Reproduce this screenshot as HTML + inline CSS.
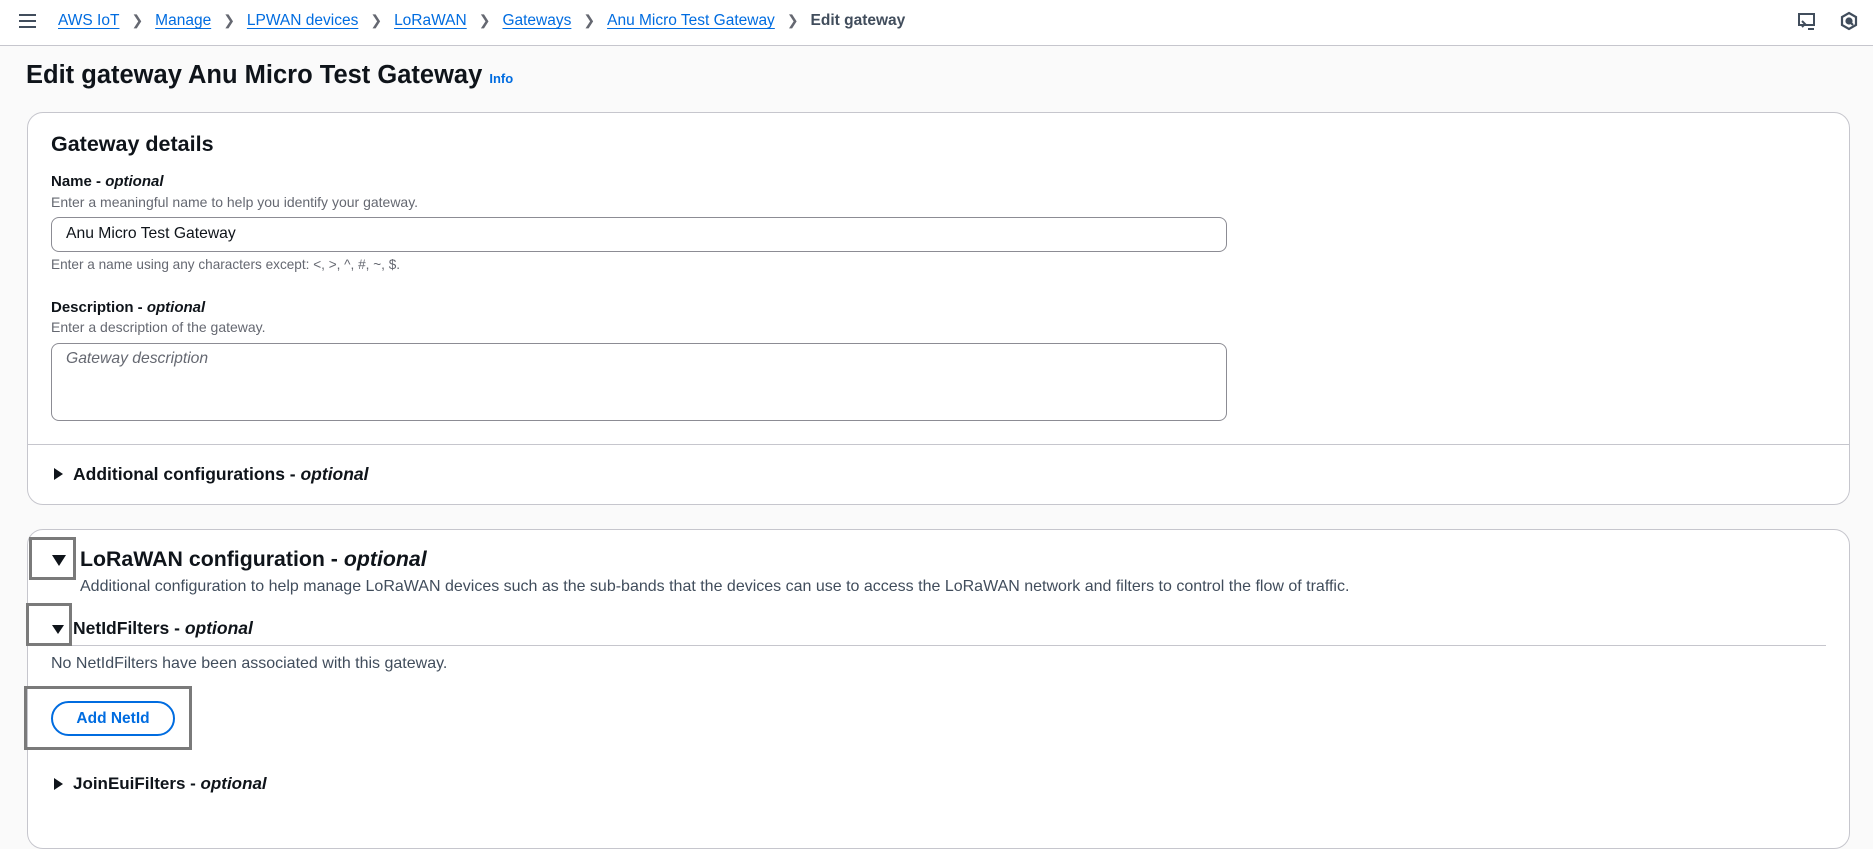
<!DOCTYPE html>
<html><head><meta charset="utf-8"><style>
*{box-sizing:border-box;margin:0;padding:0}
body{width:1873px;height:818px;overflow:hidden;background:#fafafa;font-family:"Liberation Sans",Arial,sans-serif;color:#0f141a;position:relative}
.abs{position:absolute;white-space:nowrap}
.top{position:absolute;left:0;top:0;width:1873px;height:46px;background:#fff;border-bottom:1px solid #c6c6cd}
.bc{font-size:15.5px;top:12px}
.bc a{color:#006ce0;text-decoration:underline;text-underline-offset:3px}
.sep{color:#656871;margin:0 12px;font-size:14px}
.card{position:absolute;background:#fff;border:1px solid #c6c6cd;border-radius:16px}
.lbl{font-size:15px;font-weight:bold}
.lbl i{font-style:italic}
.hint{font-size:14px;color:#656871}
.inp{position:absolute;border:1px solid #8c8c94;border-radius:8px;background:#fff}
.gbox{position:absolute;border:3px solid #7a7a7a}
.tri{position:absolute;width:0;height:0}
</style></head><body>
<div class="top"></div>
<div class="abs" style="left:19px;top:14px;width:17px">
<div style="height:2px;background:#414d5c;margin-bottom:4px"></div><div style="height:2px;background:#414d5c;margin-bottom:4px"></div><div style="height:2px;background:#414d5c"></div></div>
<div class="abs bc" style="left:58px"><a>AWS IoT</a><span class="sep">&#x276F;</span><a>Manage</a><span class="sep">&#x276F;</span><a>LPWAN devices</a><span class="sep">&#x276F;</span><a>LoRaWAN</a><span class="sep">&#x276F;</span><a>Gateways</a><span class="sep">&#x276F;</span><a>Anu Micro Test Gateway</a><span class="sep">&#x276F;</span><b style="color:#414d5c">Edit gateway</b></div>
<svg class="abs" style="left:1797px;top:12px" width="20" height="20" viewBox="0 0 20 20" fill="none" stroke="#414d5c" stroke-width="2"><rect x="2" y="2" width="15" height="11"/><path d="M5 9l3 3-3 3M11 17h6"/></svg>
<svg class="abs" style="left:1839px;top:11px" width="20" height="20" viewBox="0 0 20 20" fill="none" stroke="#414d5c" stroke-width="2.2"><path d="M10 2l7 4v8l-7 4-7-4V6z"/><circle cx="10" cy="10" r="2.5" fill="#414d5c"/><path d="M11 11l3 3"/></svg>

<div class="abs" style="left:26px;top:61px;font-size:25.5px;font-weight:bold">Edit gateway Anu Micro Test Gateway <span style="font-size:13px;color:#006ce0">Info</span></div>

<div class="card" style="left:27px;top:112px;width:1823px;height:393px"></div>
<div class="abs" style="left:51px;top:132px;font-size:21.5px;font-weight:bold">Gateway details</div>
<div class="abs lbl" style="left:51px;top:173px">Name - <i>optional</i></div>
<div class="abs hint" style="left:51px;top:194px">Enter a meaningful name to help you identify your gateway.</div>
<div class="inp" style="left:51px;top:217px;width:1176px;height:35px"></div>
<div class="abs" style="left:66px;top:225px;font-size:15.7px">Anu Micro Test Gateway</div>
<div class="abs hint" style="left:51px;top:257px;font-size:13.6px">Enter a name using any characters except: &lt;, &gt;, ^, #, ~, $.</div>
<div class="abs lbl" style="left:51px;top:299px">Description - <i>optional</i></div>
<div class="abs hint" style="left:51px;top:319px">Enter a description of the gateway.</div>
<div class="inp" style="left:51px;top:343px;width:1176px;height:78px"></div>
<div class="abs" style="left:66px;top:350px;font-size:15.7px;font-style:italic;color:#656871">Gateway description</div>
<div class="abs" style="left:28px;top:444px;width:1821px;height:1px;background:#c6c6cd"></div>
<div class="tri" style="left:54px;top:468px;border-left:9px solid #0f141a;border-top:6px solid transparent;border-bottom:6px solid transparent"></div>
<div class="abs lbl" style="left:73px;top:464px;font-size:17.5px">Additional configurations - <i>optional</i></div>

<div class="card" style="left:27px;top:529px;width:1823px;height:320px"></div>
<div class="gbox" style="left:29px;top:537px;width:47px;height:43px"></div>
<div class="tri" style="left:52px;top:555px;border-top:11px solid #0f141a;border-left:7px solid transparent;border-right:7px solid transparent"></div>
<div class="abs" style="left:80px;top:547px;font-size:21.3px;font-weight:bold">LoRaWAN configuration - <i>optional</i></div>
<div class="abs" style="left:80px;top:578px;font-size:16px;color:#414d5c">Additional configuration to help manage LoRaWAN devices such as the sub-bands that the devices can use to access the LoRaWAN network and filters to control the flow of traffic.</div>
<div class="gbox" style="left:26px;top:603px;width:46px;height:43px"></div>
<div class="tri" style="left:52px;top:625px;border-top:9px solid #0f141a;border-left:6px solid transparent;border-right:6px solid transparent"></div>
<div class="abs lbl" style="left:73px;top:618px;font-size:17.5px">NetIdFilters - <i>optional</i></div>
<div class="abs" style="left:72px;top:645px;width:1754px;height:1px;background:#c6c6cd"></div>
<div class="abs" style="left:51px;top:655px;font-size:16px;color:#414d5c">No NetIdFilters have been associated with this gateway.</div>
<div class="gbox" style="left:24px;top:686px;width:168px;height:64px"></div>
<div class="abs" style="left:51px;top:701px;width:124px;height:35px;border:2px solid #006ce0;border-radius:20px;color:#006ce0;font-weight:bold;font-size:15.5px;text-align:center;line-height:31px">Add NetId</div>
<div class="tri" style="left:54px;top:778px;border-left:9px solid #0f141a;border-top:6px solid transparent;border-bottom:6px solid transparent"></div>
<div class="abs lbl" style="left:73px;top:774px;font-size:17px">JoinEuiFilters - <i>optional</i></div>
</body></html>
